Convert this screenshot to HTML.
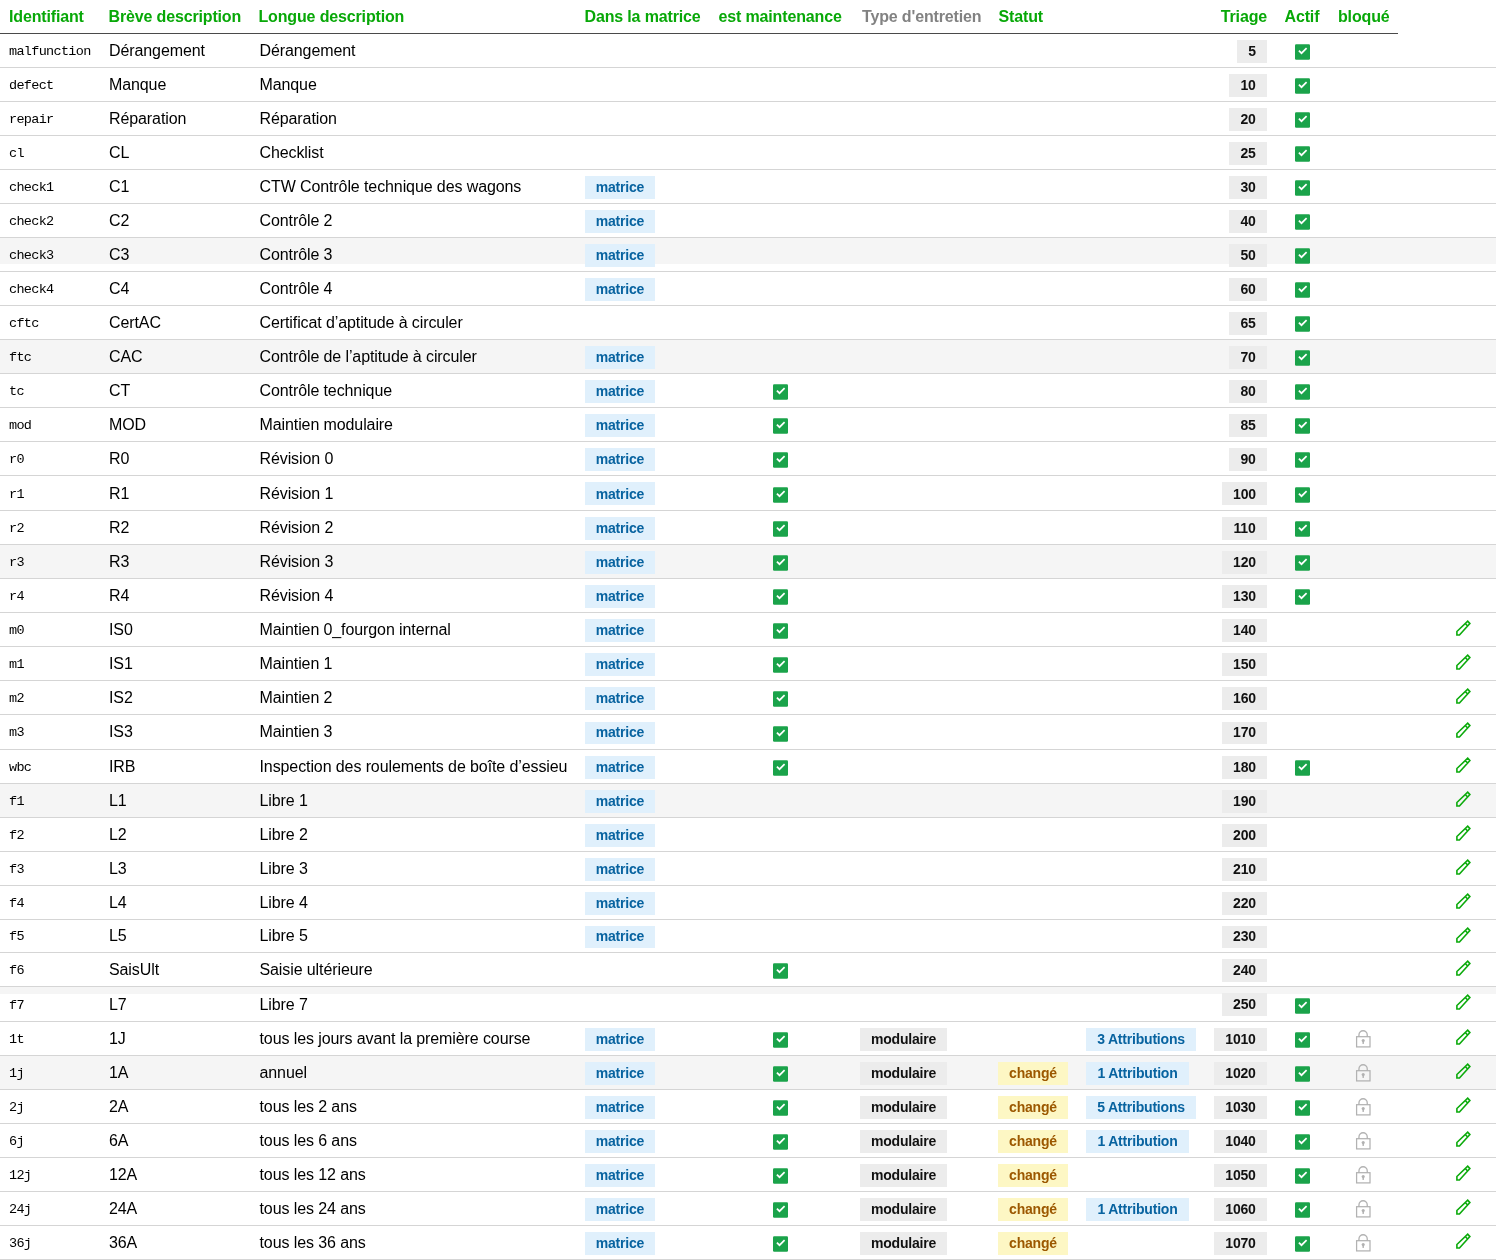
<!DOCTYPE html>
<html><head><meta charset="utf-8"><style>
html,body{margin:0;padding:0;background:#fff;}
#w{position:relative;width:1496px;height:1260px;overflow:hidden;will-change:transform;font-family:"Liberation Sans",sans-serif;color:#000;}
.hd{position:absolute;left:0;top:0;width:1398px;height:33px;border-bottom:1px solid #4a4a4a;}
.th{position:absolute;top:0;height:33px;line-height:33px;font-weight:bold;font-size:16px;letter-spacing:-0.15px;color:#08a808;white-space:nowrap;}
.th.g{color:#828282;}
.r{position:absolute;left:0;width:1496px;border-bottom:1px solid #d5d5d5;}
.r.gy{background:#f5f5f5;}
.gp{position:absolute;left:0;width:1496px;background:#f5f5f5;}
.c{position:absolute;top:0;height:33px;line-height:33px;white-space:nowrap;}
.k{position:absolute;top:6px;height:23px;white-space:nowrap;}
.x{position:absolute;top:10px;}
.id{font-family:"Liberation Mono",monospace;font-size:13.5px;letter-spacing:-0.68px;}
.tx{font-size:16px;letter-spacing:-0.1px;}
.b{display:block;font-weight:bold;font-size:14px;line-height:16px;padding:3px 0 4px;text-align:center;letter-spacing:-0.2px;}
.bm{background:#e0f0fc;color:#0863a0;}
.bt{background:#ececec;color:#111;}
.bc{background:#fdf7c4;color:#9c5800;}
.tr{background:#ececec;color:#111;}
svg{display:block;}
</style></head><body><div id="w">
<div class="hd"></div>

<div class="th " style="left:9px">Identifiant</div>
<div class="th " style="left:108.5px">Brève description</div>
<div class="th " style="left:258.5px">Longue description</div>
<div class="th " style="left:584.5px">Dans la matrice</div>
<div class="th " style="left:718.5px">est maintenance</div>
<div class="th g" style="left:862px">Type d'entretien</div>
<div class="th " style="left:998.5px">Statut</div>
<div class="th" style="right:229px">Triage</div>
<div class="th" style="left:1284.5px">Actif</div>
<div class="th" style="left:1338px">bloqué</div>
<div class="r" style="top:34px;height:33px">
<div class="c id" style="left:9px;top:1px">malfunction</div>
<div class="c tx" style="left:109px;top:0px;">Dérangement</div>
<div class="c tx" style="left:259.5px;top:0px;">Dérangement</div>
<div class="k" style="right:229px;"><span class="b tr" style="width:30px;">5</span></div>
<div class="x" style="left:1295px;"><svg class="cb" width="15" height="16" viewBox="0 0 15 16"><rect x="0" y="0.2" width="15" height="15.5" rx="1.2" fill="#1aa34a"/><path d="M3.9 6.6 L6.5 9.2 L11.6 4.1" fill="none" stroke="#fff" stroke-width="1.7"/></svg></div>
</div>
<div class="r" style="top:68px;height:33px">
<div class="c id" style="left:9px;top:1px">defect</div>
<div class="c tx" style="left:109px;top:0px;">Manque</div>
<div class="c tx" style="left:259.5px;top:0px;">Manque</div>
<div class="k" style="right:229px;"><span class="b tr" style="width:38px;">10</span></div>
<div class="x" style="left:1295px;"><svg class="cb" width="15" height="16" viewBox="0 0 15 16"><rect x="0" y="0.2" width="15" height="15.5" rx="1.2" fill="#1aa34a"/><path d="M3.9 6.6 L6.5 9.2 L11.6 4.1" fill="none" stroke="#fff" stroke-width="1.7"/></svg></div>
</div>
<div class="r" style="top:102px;height:33px">
<div class="c id" style="left:9px;top:1px">repair</div>
<div class="c tx" style="left:109px;top:0px;">Réparation</div>
<div class="c tx" style="left:259.5px;top:0px;">Réparation</div>
<div class="k" style="right:229px;"><span class="b tr" style="width:38px;">20</span></div>
<div class="x" style="left:1295px;"><svg class="cb" width="15" height="16" viewBox="0 0 15 16"><rect x="0" y="0.2" width="15" height="15.5" rx="1.2" fill="#1aa34a"/><path d="M3.9 6.6 L6.5 9.2 L11.6 4.1" fill="none" stroke="#fff" stroke-width="1.7"/></svg></div>
</div>
<div class="r" style="top:136px;height:33px">
<div class="c id" style="left:9px;top:1px">cl</div>
<div class="c tx" style="left:109px;top:0px;">CL</div>
<div class="c tx" style="left:259.5px;top:0px;">Checklist</div>
<div class="k" style="right:229px;"><span class="b tr" style="width:38px;">25</span></div>
<div class="x" style="left:1295px;"><svg class="cb" width="15" height="16" viewBox="0 0 15 16"><rect x="0" y="0.2" width="15" height="15.5" rx="1.2" fill="#1aa34a"/><path d="M3.9 6.6 L6.5 9.2 L11.6 4.1" fill="none" stroke="#fff" stroke-width="1.7"/></svg></div>
</div>
<div class="r" style="top:170px;height:33px">
<div class="c id" style="left:9px;top:1px">check1</div>
<div class="c tx" style="left:109px;top:0px;">C1</div>
<div class="c tx" style="left:259.5px;top:0px;">CTW Contrôle technique des wagons</div>
<div class="k" style="left:585px;"><span class="b bm" style="width:70px;">matrice</span></div>
<div class="k" style="right:229px;"><span class="b tr" style="width:38px;">30</span></div>
<div class="x" style="left:1295px;"><svg class="cb" width="15" height="16" viewBox="0 0 15 16"><rect x="0" y="0.2" width="15" height="15.5" rx="1.2" fill="#1aa34a"/><path d="M3.9 6.6 L6.5 9.2 L11.6 4.1" fill="none" stroke="#fff" stroke-width="1.7"/></svg></div>
</div>
<div class="r" style="top:204px;height:33px">
<div class="c id" style="left:9px;top:1px">check2</div>
<div class="c tx" style="left:109px;top:0px;">C2</div>
<div class="c tx" style="left:259.5px;top:0px;">Contrôle 2</div>
<div class="k" style="left:585px;"><span class="b bm" style="width:70px;">matrice</span></div>
<div class="k" style="right:229px;"><span class="b tr" style="width:38px;">40</span></div>
<div class="x" style="left:1295px;"><svg class="cb" width="15" height="16" viewBox="0 0 15 16"><rect x="0" y="0.2" width="15" height="15.5" rx="1.2" fill="#1aa34a"/><path d="M3.9 6.6 L6.5 9.2 L11.6 4.1" fill="none" stroke="#fff" stroke-width="1.7"/></svg></div>
</div>
<div class="r" style="top:238px;height:33px">
<div class="gp" style="top:0px;height:26px"></div>
<div class="c id" style="left:9px;top:1px">check3</div>
<div class="c tx" style="left:109px;top:0px;">C3</div>
<div class="c tx" style="left:259.5px;top:0px;">Contrôle 3</div>
<div class="k" style="left:585px;"><span class="b bm" style="width:70px;">matrice</span></div>
<div class="k" style="right:229px;"><span class="b tr" style="width:38px;">50</span></div>
<div class="x" style="left:1295px;"><svg class="cb" width="15" height="16" viewBox="0 0 15 16"><rect x="0" y="0.2" width="15" height="15.5" rx="1.2" fill="#1aa34a"/><path d="M3.9 6.6 L6.5 9.2 L11.6 4.1" fill="none" stroke="#fff" stroke-width="1.7"/></svg></div>
</div>
<div class="r" style="top:272px;height:33px">
<div class="c id" style="left:9px;top:1px">check4</div>
<div class="c tx" style="left:109px;top:0px;">C4</div>
<div class="c tx" style="left:259.5px;top:0px;">Contrôle 4</div>
<div class="k" style="left:585px;"><span class="b bm" style="width:70px;">matrice</span></div>
<div class="k" style="right:229px;"><span class="b tr" style="width:38px;">60</span></div>
<div class="x" style="left:1295px;"><svg class="cb" width="15" height="16" viewBox="0 0 15 16"><rect x="0" y="0.2" width="15" height="15.5" rx="1.2" fill="#1aa34a"/><path d="M3.9 6.6 L6.5 9.2 L11.6 4.1" fill="none" stroke="#fff" stroke-width="1.7"/></svg></div>
</div>
<div class="r" style="top:306px;height:33px">
<div class="c id" style="left:9px;top:1px">cftc</div>
<div class="c tx" style="left:109px;top:0px;">CertAC</div>
<div class="c tx" style="left:259.5px;top:0px;">Certificat d’aptitude à circuler</div>
<div class="k" style="right:229px;"><span class="b tr" style="width:38px;">65</span></div>
<div class="x" style="left:1295px;"><svg class="cb" width="15" height="16" viewBox="0 0 15 16"><rect x="0" y="0.2" width="15" height="15.5" rx="1.2" fill="#1aa34a"/><path d="M3.9 6.6 L6.5 9.2 L11.6 4.1" fill="none" stroke="#fff" stroke-width="1.7"/></svg></div>
</div>
<div class="r gy" style="top:340px;height:33px">
<div class="c id" style="left:9px;top:1px">ftc</div>
<div class="c tx" style="left:109px;top:0px;">CAC</div>
<div class="c tx" style="left:259.5px;top:0px;">Contrôle de l’aptitude à circuler</div>
<div class="k" style="left:585px;"><span class="b bm" style="width:70px;">matrice</span></div>
<div class="k" style="right:229px;"><span class="b tr" style="width:38px;">70</span></div>
<div class="x" style="left:1295px;"><svg class="cb" width="15" height="16" viewBox="0 0 15 16"><rect x="0" y="0.2" width="15" height="15.5" rx="1.2" fill="#1aa34a"/><path d="M3.9 6.6 L6.5 9.2 L11.6 4.1" fill="none" stroke="#fff" stroke-width="1.7"/></svg></div>
</div>
<div class="r" style="top:374px;height:33px">
<div class="c id" style="left:9px;top:1px">tc</div>
<div class="c tx" style="left:109px;top:0px;">CT</div>
<div class="c tx" style="left:259.5px;top:0px;">Contrôle technique</div>
<div class="k" style="left:585px;"><span class="b bm" style="width:70px;">matrice</span></div>
<div class="x" style="left:773px;"><svg class="cb" width="15" height="16" viewBox="0 0 15 16"><rect x="0" y="0.2" width="15" height="15.5" rx="1.2" fill="#1aa34a"/><path d="M3.9 6.6 L6.5 9.2 L11.6 4.1" fill="none" stroke="#fff" stroke-width="1.7"/></svg></div>
<div class="k" style="right:229px;"><span class="b tr" style="width:38px;">80</span></div>
<div class="x" style="left:1295px;"><svg class="cb" width="15" height="16" viewBox="0 0 15 16"><rect x="0" y="0.2" width="15" height="15.5" rx="1.2" fill="#1aa34a"/><path d="M3.9 6.6 L6.5 9.2 L11.6 4.1" fill="none" stroke="#fff" stroke-width="1.7"/></svg></div>
</div>
<div class="r" style="top:408px;height:33px">
<div class="c id" style="left:9px;top:1px">mod</div>
<div class="c tx" style="left:109px;top:0px;">MOD</div>
<div class="c tx" style="left:259.5px;top:0px;">Maintien modulaire</div>
<div class="k" style="left:585px;"><span class="b bm" style="width:70px;">matrice</span></div>
<div class="x" style="left:773px;"><svg class="cb" width="15" height="16" viewBox="0 0 15 16"><rect x="0" y="0.2" width="15" height="15.5" rx="1.2" fill="#1aa34a"/><path d="M3.9 6.6 L6.5 9.2 L11.6 4.1" fill="none" stroke="#fff" stroke-width="1.7"/></svg></div>
<div class="k" style="right:229px;"><span class="b tr" style="width:38px;">85</span></div>
<div class="x" style="left:1295px;"><svg class="cb" width="15" height="16" viewBox="0 0 15 16"><rect x="0" y="0.2" width="15" height="15.5" rx="1.2" fill="#1aa34a"/><path d="M3.9 6.6 L6.5 9.2 L11.6 4.1" fill="none" stroke="#fff" stroke-width="1.7"/></svg></div>
</div>
<div class="r" style="top:442px;height:33px">
<div class="c id" style="left:9px;top:1px">r0</div>
<div class="c tx" style="left:109px;top:0px;">R0</div>
<div class="c tx" style="left:259.5px;top:0px;">Révision 0</div>
<div class="k" style="left:585px;"><span class="b bm" style="width:70px;">matrice</span></div>
<div class="x" style="left:773px;"><svg class="cb" width="15" height="16" viewBox="0 0 15 16"><rect x="0" y="0.2" width="15" height="15.5" rx="1.2" fill="#1aa34a"/><path d="M3.9 6.6 L6.5 9.2 L11.6 4.1" fill="none" stroke="#fff" stroke-width="1.7"/></svg></div>
<div class="k" style="right:229px;"><span class="b tr" style="width:38px;">90</span></div>
<div class="x" style="left:1295px;"><svg class="cb" width="15" height="16" viewBox="0 0 15 16"><rect x="0" y="0.2" width="15" height="15.5" rx="1.2" fill="#1aa34a"/><path d="M3.9 6.6 L6.5 9.2 L11.6 4.1" fill="none" stroke="#fff" stroke-width="1.7"/></svg></div>
</div>
<div class="r" style="top:476px;height:34px">
<div class="c id" style="left:9px;top:2px">r1</div>
<div class="c tx" style="left:109px;top:1px;">R1</div>
<div class="c tx" style="left:259.5px;top:1px;">Révision 1</div>
<div class="k" style="left:585px;"><span class="b bm" style="width:70px;padding:4px 0 3px;">matrice</span></div>
<div class="x" style="left:773px;top:10.6px;"><svg class="cb" width="15" height="16" viewBox="0 0 15 16"><rect x="0" y="0.2" width="15" height="15.5" rx="1.2" fill="#1aa34a"/><path d="M3.9 6.6 L6.5 9.2 L11.6 4.1" fill="none" stroke="#fff" stroke-width="1.7"/></svg></div>
<div class="k" style="right:229px;"><span class="b tr" style="width:45px;padding:4px 0 3px;">100</span></div>
<div class="x" style="left:1295px;top:10.6px;"><svg class="cb" width="15" height="16" viewBox="0 0 15 16"><rect x="0" y="0.2" width="15" height="15.5" rx="1.2" fill="#1aa34a"/><path d="M3.9 6.6 L6.5 9.2 L11.6 4.1" fill="none" stroke="#fff" stroke-width="1.7"/></svg></div>
</div>
<div class="r" style="top:511px;height:33px">
<div class="c id" style="left:9px;top:1px">r2</div>
<div class="c tx" style="left:109px;top:0px;">R2</div>
<div class="c tx" style="left:259.5px;top:0px;">Révision 2</div>
<div class="k" style="left:585px;"><span class="b bm" style="width:70px;">matrice</span></div>
<div class="x" style="left:773px;"><svg class="cb" width="15" height="16" viewBox="0 0 15 16"><rect x="0" y="0.2" width="15" height="15.5" rx="1.2" fill="#1aa34a"/><path d="M3.9 6.6 L6.5 9.2 L11.6 4.1" fill="none" stroke="#fff" stroke-width="1.7"/></svg></div>
<div class="k" style="right:229px;"><span class="b tr" style="width:45px;">110</span></div>
<div class="x" style="left:1295px;"><svg class="cb" width="15" height="16" viewBox="0 0 15 16"><rect x="0" y="0.2" width="15" height="15.5" rx="1.2" fill="#1aa34a"/><path d="M3.9 6.6 L6.5 9.2 L11.6 4.1" fill="none" stroke="#fff" stroke-width="1.7"/></svg></div>
</div>
<div class="r gy" style="top:545px;height:33px">
<div class="c id" style="left:9px;top:1px">r3</div>
<div class="c tx" style="left:109px;top:0px;">R3</div>
<div class="c tx" style="left:259.5px;top:0px;">Révision 3</div>
<div class="k" style="left:585px;"><span class="b bm" style="width:70px;">matrice</span></div>
<div class="x" style="left:773px;"><svg class="cb" width="15" height="16" viewBox="0 0 15 16"><rect x="0" y="0.2" width="15" height="15.5" rx="1.2" fill="#1aa34a"/><path d="M3.9 6.6 L6.5 9.2 L11.6 4.1" fill="none" stroke="#fff" stroke-width="1.7"/></svg></div>
<div class="k" style="right:229px;"><span class="b tr" style="width:45px;">120</span></div>
<div class="x" style="left:1295px;"><svg class="cb" width="15" height="16" viewBox="0 0 15 16"><rect x="0" y="0.2" width="15" height="15.5" rx="1.2" fill="#1aa34a"/><path d="M3.9 6.6 L6.5 9.2 L11.6 4.1" fill="none" stroke="#fff" stroke-width="1.7"/></svg></div>
</div>
<div class="r" style="top:579px;height:33px">
<div class="c id" style="left:9px;top:1px">r4</div>
<div class="c tx" style="left:109px;top:0px;">R4</div>
<div class="c tx" style="left:259.5px;top:0px;">Révision 4</div>
<div class="k" style="left:585px;"><span class="b bm" style="width:70px;">matrice</span></div>
<div class="x" style="left:773px;"><svg class="cb" width="15" height="16" viewBox="0 0 15 16"><rect x="0" y="0.2" width="15" height="15.5" rx="1.2" fill="#1aa34a"/><path d="M3.9 6.6 L6.5 9.2 L11.6 4.1" fill="none" stroke="#fff" stroke-width="1.7"/></svg></div>
<div class="k" style="right:229px;"><span class="b tr" style="width:45px;">130</span></div>
<div class="x" style="left:1295px;"><svg class="cb" width="15" height="16" viewBox="0 0 15 16"><rect x="0" y="0.2" width="15" height="15.5" rx="1.2" fill="#1aa34a"/><path d="M3.9 6.6 L6.5 9.2 L11.6 4.1" fill="none" stroke="#fff" stroke-width="1.7"/></svg></div>
</div>
<div class="r" style="top:613px;height:33px">
<div class="c id" style="left:9px;top:1px">m0</div>
<div class="c tx" style="left:109px;top:0px;">IS0</div>
<div class="c tx" style="left:259.5px;top:0px;">Maintien 0_fourgon internal</div>
<div class="k" style="left:585px;"><span class="b bm" style="width:70px;">matrice</span></div>
<div class="x" style="left:773px;"><svg class="cb" width="15" height="16" viewBox="0 0 15 16"><rect x="0" y="0.2" width="15" height="15.5" rx="1.2" fill="#1aa34a"/><path d="M3.9 6.6 L6.5 9.2 L11.6 4.1" fill="none" stroke="#fff" stroke-width="1.7"/></svg></div>
<div class="k" style="right:229px;"><span class="b tr" style="width:45px;">140</span></div>
<div style="position:absolute;left:1450px;top:4.3px"><svg width="26" height="26" viewBox="0 0 26 26"><path d="M6.9 14.54 L17.71 4.24 L19.87 6.6 L9.45 18 L6.9 18 Z M15.3 6.5 L17.55 8.95" fill="none" stroke="#0caa0c" stroke-width="1.6" stroke-linejoin="miter"/></svg></div>
</div>
<div class="r" style="top:647px;height:33px">
<div class="c id" style="left:9px;top:1px">m1</div>
<div class="c tx" style="left:109px;top:0px;">IS1</div>
<div class="c tx" style="left:259.5px;top:0px;">Maintien 1</div>
<div class="k" style="left:585px;"><span class="b bm" style="width:70px;">matrice</span></div>
<div class="x" style="left:773px;"><svg class="cb" width="15" height="16" viewBox="0 0 15 16"><rect x="0" y="0.2" width="15" height="15.5" rx="1.2" fill="#1aa34a"/><path d="M3.9 6.6 L6.5 9.2 L11.6 4.1" fill="none" stroke="#fff" stroke-width="1.7"/></svg></div>
<div class="k" style="right:229px;"><span class="b tr" style="width:45px;">150</span></div>
<div style="position:absolute;left:1450px;top:4.3px"><svg width="26" height="26" viewBox="0 0 26 26"><path d="M6.9 14.54 L17.71 4.24 L19.87 6.6 L9.45 18 L6.9 18 Z M15.3 6.5 L17.55 8.95" fill="none" stroke="#0caa0c" stroke-width="1.6" stroke-linejoin="miter"/></svg></div>
</div>
<div class="r" style="top:681px;height:33px">
<div class="c id" style="left:9px;top:1px">m2</div>
<div class="c tx" style="left:109px;top:0px;">IS2</div>
<div class="c tx" style="left:259.5px;top:0px;">Maintien 2</div>
<div class="k" style="left:585px;"><span class="b bm" style="width:70px;">matrice</span></div>
<div class="x" style="left:773px;"><svg class="cb" width="15" height="16" viewBox="0 0 15 16"><rect x="0" y="0.2" width="15" height="15.5" rx="1.2" fill="#1aa34a"/><path d="M3.9 6.6 L6.5 9.2 L11.6 4.1" fill="none" stroke="#fff" stroke-width="1.7"/></svg></div>
<div class="k" style="right:229px;"><span class="b tr" style="width:45px;">160</span></div>
<div style="position:absolute;left:1450px;top:4.3px"><svg width="26" height="26" viewBox="0 0 26 26"><path d="M6.9 14.54 L17.71 4.24 L19.87 6.6 L9.45 18 L6.9 18 Z M15.3 6.5 L17.55 8.95" fill="none" stroke="#0caa0c" stroke-width="1.6" stroke-linejoin="miter"/></svg></div>
</div>
<div class="r" style="top:715px;height:34px">
<div class="c id" style="left:9px;top:1px">m3</div>
<div class="c tx" style="left:109px;top:0px;">IS3</div>
<div class="c tx" style="left:259.5px;top:0px;">Maintien 3</div>
<div class="k" style="left:585px;top:7px;"><span class="b bm" style="width:70px;padding:2px 0 4px;">matrice</span></div>
<div class="x" style="left:773px;top:10.6px;"><svg class="cb" width="15" height="16" viewBox="0 0 15 16"><rect x="0" y="0.2" width="15" height="15.5" rx="1.2" fill="#1aa34a"/><path d="M3.9 6.6 L6.5 9.2 L11.6 4.1" fill="none" stroke="#fff" stroke-width="1.7"/></svg></div>
<div class="k" style="right:229px;top:7px;"><span class="b tr" style="width:45px;padding:2px 0 4px;">170</span></div>
<div style="position:absolute;left:1450px;top:4.3px"><svg width="26" height="26" viewBox="0 0 26 26"><path d="M6.9 14.54 L17.71 4.24 L19.87 6.6 L9.45 18 L6.9 18 Z M15.3 6.5 L17.55 8.95" fill="none" stroke="#0caa0c" stroke-width="1.6" stroke-linejoin="miter"/></svg></div>
</div>
<div class="r" style="top:750px;height:33px">
<div class="c id" style="left:9px;top:1px">wbc</div>
<div class="c tx" style="left:109px;top:0px;">IRB</div>
<div class="c tx" style="left:259.5px;top:0px;">Inspection des roulements de boîte d’essieu</div>
<div class="k" style="left:585px;"><span class="b bm" style="width:70px;">matrice</span></div>
<div class="x" style="left:773px;"><svg class="cb" width="15" height="16" viewBox="0 0 15 16"><rect x="0" y="0.2" width="15" height="15.5" rx="1.2" fill="#1aa34a"/><path d="M3.9 6.6 L6.5 9.2 L11.6 4.1" fill="none" stroke="#fff" stroke-width="1.7"/></svg></div>
<div class="k" style="right:229px;"><span class="b tr" style="width:45px;">180</span></div>
<div class="x" style="left:1295px;"><svg class="cb" width="15" height="16" viewBox="0 0 15 16"><rect x="0" y="0.2" width="15" height="15.5" rx="1.2" fill="#1aa34a"/><path d="M3.9 6.6 L6.5 9.2 L11.6 4.1" fill="none" stroke="#fff" stroke-width="1.7"/></svg></div>
<div style="position:absolute;left:1450px;top:4.3px"><svg width="26" height="26" viewBox="0 0 26 26"><path d="M6.9 14.54 L17.71 4.24 L19.87 6.6 L9.45 18 L6.9 18 Z M15.3 6.5 L17.55 8.95" fill="none" stroke="#0caa0c" stroke-width="1.6" stroke-linejoin="miter"/></svg></div>
</div>
<div class="r gy" style="top:784px;height:33px">
<div class="c id" style="left:9px;top:1px">f1</div>
<div class="c tx" style="left:109px;top:0px;">L1</div>
<div class="c tx" style="left:259.5px;top:0px;">Libre 1</div>
<div class="k" style="left:585px;"><span class="b bm" style="width:70px;">matrice</span></div>
<div class="k" style="right:229px;"><span class="b tr" style="width:45px;">190</span></div>
<div style="position:absolute;left:1450px;top:4.3px"><svg width="26" height="26" viewBox="0 0 26 26"><path d="M6.9 14.54 L17.71 4.24 L19.87 6.6 L9.45 18 L6.9 18 Z M15.3 6.5 L17.55 8.95" fill="none" stroke="#0caa0c" stroke-width="1.6" stroke-linejoin="miter"/></svg></div>
</div>
<div class="r" style="top:818px;height:33px">
<div class="c id" style="left:9px;top:1px">f2</div>
<div class="c tx" style="left:109px;top:0px;">L2</div>
<div class="c tx" style="left:259.5px;top:0px;">Libre 2</div>
<div class="k" style="left:585px;"><span class="b bm" style="width:70px;">matrice</span></div>
<div class="k" style="right:229px;"><span class="b tr" style="width:45px;">200</span></div>
<div style="position:absolute;left:1450px;top:4.3px"><svg width="26" height="26" viewBox="0 0 26 26"><path d="M6.9 14.54 L17.71 4.24 L19.87 6.6 L9.45 18 L6.9 18 Z M15.3 6.5 L17.55 8.95" fill="none" stroke="#0caa0c" stroke-width="1.6" stroke-linejoin="miter"/></svg></div>
</div>
<div class="r" style="top:852px;height:33px">
<div class="c id" style="left:9px;top:1px">f3</div>
<div class="c tx" style="left:109px;top:0px;">L3</div>
<div class="c tx" style="left:259.5px;top:0px;">Libre 3</div>
<div class="k" style="left:585px;"><span class="b bm" style="width:70px;">matrice</span></div>
<div class="k" style="right:229px;"><span class="b tr" style="width:45px;">210</span></div>
<div style="position:absolute;left:1450px;top:4.3px"><svg width="26" height="26" viewBox="0 0 26 26"><path d="M6.9 14.54 L17.71 4.24 L19.87 6.6 L9.45 18 L6.9 18 Z M15.3 6.5 L17.55 8.95" fill="none" stroke="#0caa0c" stroke-width="1.6" stroke-linejoin="miter"/></svg></div>
</div>
<div class="r" style="top:886px;height:33px">
<div class="c id" style="left:9px;top:1px">f4</div>
<div class="c tx" style="left:109px;top:0px;">L4</div>
<div class="c tx" style="left:259.5px;top:0px;">Libre 4</div>
<div class="k" style="left:585px;"><span class="b bm" style="width:70px;">matrice</span></div>
<div class="k" style="right:229px;"><span class="b tr" style="width:45px;">220</span></div>
<div style="position:absolute;left:1450px;top:4.3px"><svg width="26" height="26" viewBox="0 0 26 26"><path d="M6.9 14.54 L17.71 4.24 L19.87 6.6 L9.45 18 L6.9 18 Z M15.3 6.5 L17.55 8.95" fill="none" stroke="#0caa0c" stroke-width="1.6" stroke-linejoin="miter"/></svg></div>
</div>
<div class="r" style="top:920px;height:32px">
<div class="c id" style="left:9px;top:0px">f5</div>
<div class="c tx" style="left:109px;top:-1px;">L5</div>
<div class="c tx" style="left:259.5px;top:-1px;">Libre 5</div>
<div class="k" style="left:585px;"><span class="b bm" style="width:70px;padding:2px 0 4px;">matrice</span></div>
<div class="k" style="right:229px;"><span class="b tr" style="width:45px;padding:2px 0 4px;">230</span></div>
<div style="position:absolute;left:1450px;top:4.3px"><svg width="26" height="26" viewBox="0 0 26 26"><path d="M6.9 14.54 L17.71 4.24 L19.87 6.6 L9.45 18 L6.9 18 Z M15.3 6.5 L17.55 8.95" fill="none" stroke="#0caa0c" stroke-width="1.6" stroke-linejoin="miter"/></svg></div>
</div>
<div class="r" style="top:953px;height:33px">
<div class="c id" style="left:9px;top:1px">f6</div>
<div class="c tx" style="left:109px;top:0px;">SaisUlt</div>
<div class="c tx" style="left:259.5px;top:0px;">Saisie ultérieure</div>
<div class="x" style="left:773px;"><svg class="cb" width="15" height="16" viewBox="0 0 15 16"><rect x="0" y="0.2" width="15" height="15.5" rx="1.2" fill="#1aa34a"/><path d="M3.9 6.6 L6.5 9.2 L11.6 4.1" fill="none" stroke="#fff" stroke-width="1.7"/></svg></div>
<div class="k" style="right:229px;"><span class="b tr" style="width:45px;">240</span></div>
<div style="position:absolute;left:1450px;top:4.3px"><svg width="26" height="26" viewBox="0 0 26 26"><path d="M6.9 14.54 L17.71 4.24 L19.87 6.6 L9.45 18 L6.9 18 Z M15.3 6.5 L17.55 8.95" fill="none" stroke="#0caa0c" stroke-width="1.6" stroke-linejoin="miter"/></svg></div>
</div>
<div class="r" style="top:987px;height:34px">
<div class="gp" style="top:0px;height:7px"></div>
<div class="c id" style="left:9px;top:2px">f7</div>
<div class="c tx" style="left:109px;top:1px;">L7</div>
<div class="c tx" style="left:259.5px;top:1px;">Libre 7</div>
<div class="k" style="right:229px;"><span class="b tr" style="width:45px;">250</span></div>
<div class="x" style="left:1295px;top:10.6px;"><svg class="cb" width="15" height="16" viewBox="0 0 15 16"><rect x="0" y="0.2" width="15" height="15.5" rx="1.2" fill="#1aa34a"/><path d="M3.9 6.6 L6.5 9.2 L11.6 4.1" fill="none" stroke="#fff" stroke-width="1.7"/></svg></div>
<div style="position:absolute;left:1450px;top:4.3px"><svg width="26" height="26" viewBox="0 0 26 26"><path d="M6.9 14.54 L17.71 4.24 L19.87 6.6 L9.45 18 L6.9 18 Z M15.3 6.5 L17.55 8.95" fill="none" stroke="#0caa0c" stroke-width="1.6" stroke-linejoin="miter"/></svg></div>
</div>
<div class="r" style="top:1022px;height:33px">
<div class="c id" style="left:9px;top:1px">1t</div>
<div class="c tx" style="left:109px;top:0px;">1J</div>
<div class="c tx" style="left:259.5px;top:0px;">tous les jours avant la première course</div>
<div class="k" style="left:585px;"><span class="b bm" style="width:70px;">matrice</span></div>
<div class="x" style="left:773px;"><svg class="cb" width="15" height="16" viewBox="0 0 15 16"><rect x="0" y="0.2" width="15" height="15.5" rx="1.2" fill="#1aa34a"/><path d="M3.9 6.6 L6.5 9.2 L11.6 4.1" fill="none" stroke="#fff" stroke-width="1.7"/></svg></div>
<div class="k" style="left:860px;"><span class="b bt" style="width:87px;">modulaire</span></div>
<div class="k" style="left:1086px;"><span class="b bm" style="width:110px;">3 Attributions</span></div>
<div class="k" style="right:229px;"><span class="b tr" style="width:53px;">1010</span></div>
<div class="x" style="left:1295px;"><svg class="cb" width="15" height="16" viewBox="0 0 15 16"><rect x="0" y="0.2" width="15" height="15.5" rx="1.2" fill="#1aa34a"/><path d="M3.9 6.6 L6.5 9.2 L11.6 4.1" fill="none" stroke="#fff" stroke-width="1.7"/></svg></div>
<div style="position:absolute;left:1355px;top:7px"><svg width="17" height="20" viewBox="0 0 17 20"><path d="M3.95 7.7 V5.9 A4.15 4.15 0 0 1 12.25 5.9 V7.7" fill="none" stroke="#b2b2b2" stroke-width="1.3"/><rect x="1.6" y="7.7" width="13.4" height="10.2" fill="none" stroke="#b2b2b2" stroke-width="1.25"/><circle cx="8.2" cy="11.5" r="1.55" fill="#b2b2b2"/><rect x="7.45" y="11.5" width="1.5" height="3.4" fill="#b2b2b2"/></svg></div>
<div style="position:absolute;left:1450px;top:4.3px"><svg width="26" height="26" viewBox="0 0 26 26"><path d="M6.9 14.54 L17.71 4.24 L19.87 6.6 L9.45 18 L6.9 18 Z M15.3 6.5 L17.55 8.95" fill="none" stroke="#0caa0c" stroke-width="1.6" stroke-linejoin="miter"/></svg></div>
</div>
<div class="r gy" style="top:1056px;height:33px">
<div class="c id" style="left:9px;top:1px">1j</div>
<div class="c tx" style="left:109px;top:0px;">1A</div>
<div class="c tx" style="left:259.5px;top:0px;">annuel</div>
<div class="k" style="left:585px;"><span class="b bm" style="width:70px;">matrice</span></div>
<div class="x" style="left:773px;"><svg class="cb" width="15" height="16" viewBox="0 0 15 16"><rect x="0" y="0.2" width="15" height="15.5" rx="1.2" fill="#1aa34a"/><path d="M3.9 6.6 L6.5 9.2 L11.6 4.1" fill="none" stroke="#fff" stroke-width="1.7"/></svg></div>
<div class="k" style="left:860px;"><span class="b bt" style="width:87px;">modulaire</span></div>
<div class="k" style="left:998px;"><span class="b bc" style="width:70px;">changé</span></div>
<div class="k" style="left:1086px;"><span class="b bm" style="width:103px;">1 Attribution</span></div>
<div class="k" style="right:229px;"><span class="b tr" style="width:53px;">1020</span></div>
<div class="x" style="left:1295px;"><svg class="cb" width="15" height="16" viewBox="0 0 15 16"><rect x="0" y="0.2" width="15" height="15.5" rx="1.2" fill="#1aa34a"/><path d="M3.9 6.6 L6.5 9.2 L11.6 4.1" fill="none" stroke="#fff" stroke-width="1.7"/></svg></div>
<div style="position:absolute;left:1355px;top:7px"><svg width="17" height="20" viewBox="0 0 17 20"><path d="M3.95 7.7 V5.9 A4.15 4.15 0 0 1 12.25 5.9 V7.7" fill="none" stroke="#b2b2b2" stroke-width="1.3"/><rect x="1.6" y="7.7" width="13.4" height="10.2" fill="none" stroke="#b2b2b2" stroke-width="1.25"/><circle cx="8.2" cy="11.5" r="1.55" fill="#b2b2b2"/><rect x="7.45" y="11.5" width="1.5" height="3.4" fill="#b2b2b2"/></svg></div>
<div style="position:absolute;left:1450px;top:4.3px"><svg width="26" height="26" viewBox="0 0 26 26"><path d="M6.9 14.54 L17.71 4.24 L19.87 6.6 L9.45 18 L6.9 18 Z M15.3 6.5 L17.55 8.95" fill="none" stroke="#0caa0c" stroke-width="1.6" stroke-linejoin="miter"/></svg></div>
</div>
<div class="r" style="top:1090px;height:33px">
<div class="c id" style="left:9px;top:1px">2j</div>
<div class="c tx" style="left:109px;top:0px;">2A</div>
<div class="c tx" style="left:259.5px;top:0px;">tous les 2 ans</div>
<div class="k" style="left:585px;"><span class="b bm" style="width:70px;">matrice</span></div>
<div class="x" style="left:773px;"><svg class="cb" width="15" height="16" viewBox="0 0 15 16"><rect x="0" y="0.2" width="15" height="15.5" rx="1.2" fill="#1aa34a"/><path d="M3.9 6.6 L6.5 9.2 L11.6 4.1" fill="none" stroke="#fff" stroke-width="1.7"/></svg></div>
<div class="k" style="left:860px;"><span class="b bt" style="width:87px;">modulaire</span></div>
<div class="k" style="left:998px;"><span class="b bc" style="width:70px;">changé</span></div>
<div class="k" style="left:1086px;"><span class="b bm" style="width:110px;">5 Attributions</span></div>
<div class="k" style="right:229px;"><span class="b tr" style="width:53px;">1030</span></div>
<div class="x" style="left:1295px;"><svg class="cb" width="15" height="16" viewBox="0 0 15 16"><rect x="0" y="0.2" width="15" height="15.5" rx="1.2" fill="#1aa34a"/><path d="M3.9 6.6 L6.5 9.2 L11.6 4.1" fill="none" stroke="#fff" stroke-width="1.7"/></svg></div>
<div style="position:absolute;left:1355px;top:7px"><svg width="17" height="20" viewBox="0 0 17 20"><path d="M3.95 7.7 V5.9 A4.15 4.15 0 0 1 12.25 5.9 V7.7" fill="none" stroke="#b2b2b2" stroke-width="1.3"/><rect x="1.6" y="7.7" width="13.4" height="10.2" fill="none" stroke="#b2b2b2" stroke-width="1.25"/><circle cx="8.2" cy="11.5" r="1.55" fill="#b2b2b2"/><rect x="7.45" y="11.5" width="1.5" height="3.4" fill="#b2b2b2"/></svg></div>
<div style="position:absolute;left:1450px;top:4.3px"><svg width="26" height="26" viewBox="0 0 26 26"><path d="M6.9 14.54 L17.71 4.24 L19.87 6.6 L9.45 18 L6.9 18 Z M15.3 6.5 L17.55 8.95" fill="none" stroke="#0caa0c" stroke-width="1.6" stroke-linejoin="miter"/></svg></div>
</div>
<div class="r" style="top:1124px;height:33px">
<div class="c id" style="left:9px;top:1px">6j</div>
<div class="c tx" style="left:109px;top:0px;">6A</div>
<div class="c tx" style="left:259.5px;top:0px;">tous les 6 ans</div>
<div class="k" style="left:585px;"><span class="b bm" style="width:70px;">matrice</span></div>
<div class="x" style="left:773px;"><svg class="cb" width="15" height="16" viewBox="0 0 15 16"><rect x="0" y="0.2" width="15" height="15.5" rx="1.2" fill="#1aa34a"/><path d="M3.9 6.6 L6.5 9.2 L11.6 4.1" fill="none" stroke="#fff" stroke-width="1.7"/></svg></div>
<div class="k" style="left:860px;"><span class="b bt" style="width:87px;">modulaire</span></div>
<div class="k" style="left:998px;"><span class="b bc" style="width:70px;">changé</span></div>
<div class="k" style="left:1086px;"><span class="b bm" style="width:103px;">1 Attribution</span></div>
<div class="k" style="right:229px;"><span class="b tr" style="width:53px;">1040</span></div>
<div class="x" style="left:1295px;"><svg class="cb" width="15" height="16" viewBox="0 0 15 16"><rect x="0" y="0.2" width="15" height="15.5" rx="1.2" fill="#1aa34a"/><path d="M3.9 6.6 L6.5 9.2 L11.6 4.1" fill="none" stroke="#fff" stroke-width="1.7"/></svg></div>
<div style="position:absolute;left:1355px;top:7px"><svg width="17" height="20" viewBox="0 0 17 20"><path d="M3.95 7.7 V5.9 A4.15 4.15 0 0 1 12.25 5.9 V7.7" fill="none" stroke="#b2b2b2" stroke-width="1.3"/><rect x="1.6" y="7.7" width="13.4" height="10.2" fill="none" stroke="#b2b2b2" stroke-width="1.25"/><circle cx="8.2" cy="11.5" r="1.55" fill="#b2b2b2"/><rect x="7.45" y="11.5" width="1.5" height="3.4" fill="#b2b2b2"/></svg></div>
<div style="position:absolute;left:1450px;top:4.3px"><svg width="26" height="26" viewBox="0 0 26 26"><path d="M6.9 14.54 L17.71 4.24 L19.87 6.6 L9.45 18 L6.9 18 Z M15.3 6.5 L17.55 8.95" fill="none" stroke="#0caa0c" stroke-width="1.6" stroke-linejoin="miter"/></svg></div>
</div>
<div class="r" style="top:1158px;height:33px">
<div class="c id" style="left:9px;top:1px">12j</div>
<div class="c tx" style="left:109px;top:0px;">12A</div>
<div class="c tx" style="left:259.5px;top:0px;">tous les 12 ans</div>
<div class="k" style="left:585px;"><span class="b bm" style="width:70px;">matrice</span></div>
<div class="x" style="left:773px;"><svg class="cb" width="15" height="16" viewBox="0 0 15 16"><rect x="0" y="0.2" width="15" height="15.5" rx="1.2" fill="#1aa34a"/><path d="M3.9 6.6 L6.5 9.2 L11.6 4.1" fill="none" stroke="#fff" stroke-width="1.7"/></svg></div>
<div class="k" style="left:860px;"><span class="b bt" style="width:87px;">modulaire</span></div>
<div class="k" style="left:998px;"><span class="b bc" style="width:70px;">changé</span></div>
<div class="k" style="right:229px;"><span class="b tr" style="width:53px;">1050</span></div>
<div class="x" style="left:1295px;"><svg class="cb" width="15" height="16" viewBox="0 0 15 16"><rect x="0" y="0.2" width="15" height="15.5" rx="1.2" fill="#1aa34a"/><path d="M3.9 6.6 L6.5 9.2 L11.6 4.1" fill="none" stroke="#fff" stroke-width="1.7"/></svg></div>
<div style="position:absolute;left:1355px;top:7px"><svg width="17" height="20" viewBox="0 0 17 20"><path d="M3.95 7.7 V5.9 A4.15 4.15 0 0 1 12.25 5.9 V7.7" fill="none" stroke="#b2b2b2" stroke-width="1.3"/><rect x="1.6" y="7.7" width="13.4" height="10.2" fill="none" stroke="#b2b2b2" stroke-width="1.25"/><circle cx="8.2" cy="11.5" r="1.55" fill="#b2b2b2"/><rect x="7.45" y="11.5" width="1.5" height="3.4" fill="#b2b2b2"/></svg></div>
<div style="position:absolute;left:1450px;top:4.3px"><svg width="26" height="26" viewBox="0 0 26 26"><path d="M6.9 14.54 L17.71 4.24 L19.87 6.6 L9.45 18 L6.9 18 Z M15.3 6.5 L17.55 8.95" fill="none" stroke="#0caa0c" stroke-width="1.6" stroke-linejoin="miter"/></svg></div>
</div>
<div class="r" style="top:1192px;height:33px">
<div class="c id" style="left:9px;top:1px">24j</div>
<div class="c tx" style="left:109px;top:0px;">24A</div>
<div class="c tx" style="left:259.5px;top:0px;">tous les 24 ans</div>
<div class="k" style="left:585px;"><span class="b bm" style="width:70px;">matrice</span></div>
<div class="x" style="left:773px;"><svg class="cb" width="15" height="16" viewBox="0 0 15 16"><rect x="0" y="0.2" width="15" height="15.5" rx="1.2" fill="#1aa34a"/><path d="M3.9 6.6 L6.5 9.2 L11.6 4.1" fill="none" stroke="#fff" stroke-width="1.7"/></svg></div>
<div class="k" style="left:860px;"><span class="b bt" style="width:87px;">modulaire</span></div>
<div class="k" style="left:998px;"><span class="b bc" style="width:70px;">changé</span></div>
<div class="k" style="left:1086px;"><span class="b bm" style="width:103px;">1 Attribution</span></div>
<div class="k" style="right:229px;"><span class="b tr" style="width:53px;">1060</span></div>
<div class="x" style="left:1295px;"><svg class="cb" width="15" height="16" viewBox="0 0 15 16"><rect x="0" y="0.2" width="15" height="15.5" rx="1.2" fill="#1aa34a"/><path d="M3.9 6.6 L6.5 9.2 L11.6 4.1" fill="none" stroke="#fff" stroke-width="1.7"/></svg></div>
<div style="position:absolute;left:1355px;top:7px"><svg width="17" height="20" viewBox="0 0 17 20"><path d="M3.95 7.7 V5.9 A4.15 4.15 0 0 1 12.25 5.9 V7.7" fill="none" stroke="#b2b2b2" stroke-width="1.3"/><rect x="1.6" y="7.7" width="13.4" height="10.2" fill="none" stroke="#b2b2b2" stroke-width="1.25"/><circle cx="8.2" cy="11.5" r="1.55" fill="#b2b2b2"/><rect x="7.45" y="11.5" width="1.5" height="3.4" fill="#b2b2b2"/></svg></div>
<div style="position:absolute;left:1450px;top:4.3px"><svg width="26" height="26" viewBox="0 0 26 26"><path d="M6.9 14.54 L17.71 4.24 L19.87 6.6 L9.45 18 L6.9 18 Z M15.3 6.5 L17.55 8.95" fill="none" stroke="#0caa0c" stroke-width="1.6" stroke-linejoin="miter"/></svg></div>
</div>
<div class="r" style="top:1226px;height:33px">
<div class="c id" style="left:9px;top:1px">36j</div>
<div class="c tx" style="left:109px;top:0px;">36A</div>
<div class="c tx" style="left:259.5px;top:0px;">tous les 36 ans</div>
<div class="k" style="left:585px;"><span class="b bm" style="width:70px;">matrice</span></div>
<div class="x" style="left:773px;"><svg class="cb" width="15" height="16" viewBox="0 0 15 16"><rect x="0" y="0.2" width="15" height="15.5" rx="1.2" fill="#1aa34a"/><path d="M3.9 6.6 L6.5 9.2 L11.6 4.1" fill="none" stroke="#fff" stroke-width="1.7"/></svg></div>
<div class="k" style="left:860px;"><span class="b bt" style="width:87px;">modulaire</span></div>
<div class="k" style="left:998px;"><span class="b bc" style="width:70px;">changé</span></div>
<div class="k" style="right:229px;"><span class="b tr" style="width:53px;">1070</span></div>
<div class="x" style="left:1295px;"><svg class="cb" width="15" height="16" viewBox="0 0 15 16"><rect x="0" y="0.2" width="15" height="15.5" rx="1.2" fill="#1aa34a"/><path d="M3.9 6.6 L6.5 9.2 L11.6 4.1" fill="none" stroke="#fff" stroke-width="1.7"/></svg></div>
<div style="position:absolute;left:1355px;top:7px"><svg width="17" height="20" viewBox="0 0 17 20"><path d="M3.95 7.7 V5.9 A4.15 4.15 0 0 1 12.25 5.9 V7.7" fill="none" stroke="#b2b2b2" stroke-width="1.3"/><rect x="1.6" y="7.7" width="13.4" height="10.2" fill="none" stroke="#b2b2b2" stroke-width="1.25"/><circle cx="8.2" cy="11.5" r="1.55" fill="#b2b2b2"/><rect x="7.45" y="11.5" width="1.5" height="3.4" fill="#b2b2b2"/></svg></div>
<div style="position:absolute;left:1450px;top:4.3px"><svg width="26" height="26" viewBox="0 0 26 26"><path d="M6.9 14.54 L17.71 4.24 L19.87 6.6 L9.45 18 L6.9 18 Z M15.3 6.5 L17.55 8.95" fill="none" stroke="#0caa0c" stroke-width="1.6" stroke-linejoin="miter"/></svg></div>
</div>
</div></body></html>
